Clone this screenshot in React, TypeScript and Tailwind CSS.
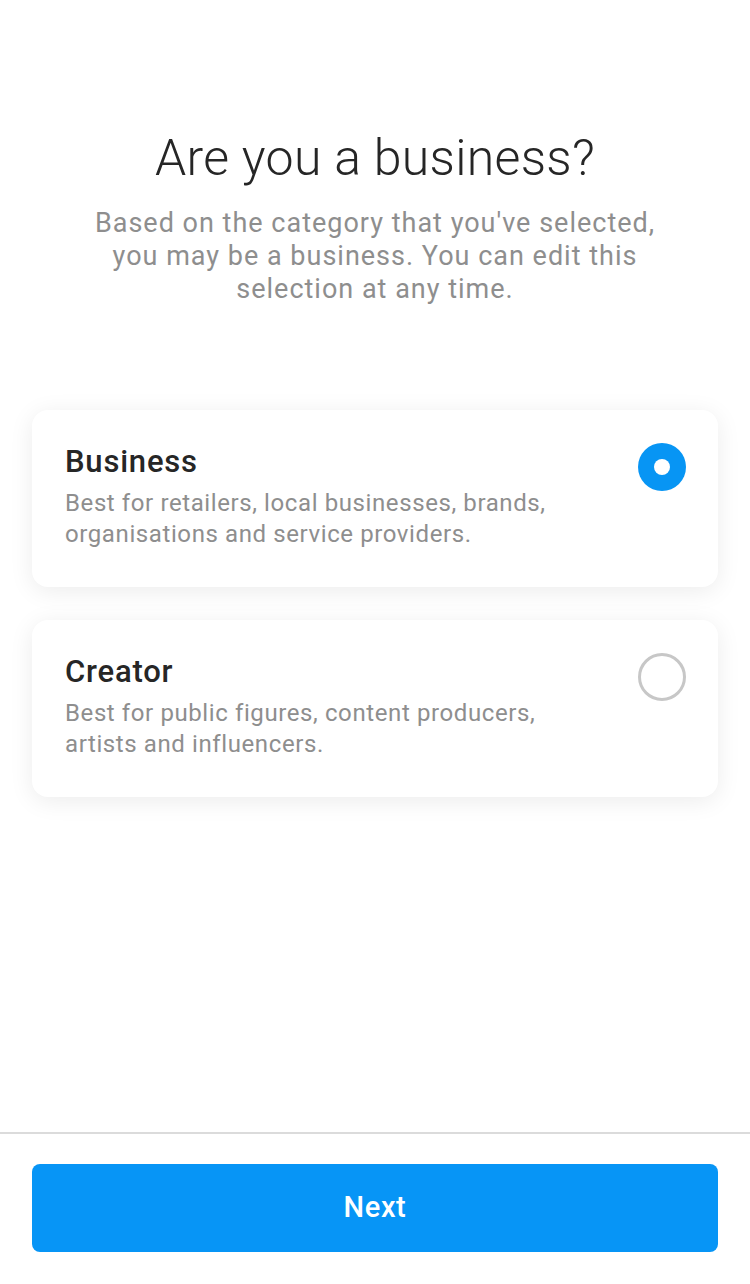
import React, { useState } from "react";

const options = [
  {
    id: "business",
    title: "Business",
    description: "Best for retailers, local businesses, brands, organisations and service providers.",
  },
  {
    id: "creator",
    title: "Creator",
    description: "Best for public figures, content producers, artists and influencers.",
  },
];

const Radio = ({ checked }: { checked: boolean }) =>
  checked ? (
    <div className="flex h-[48px] w-[48px] shrink-0 items-center justify-center rounded-full bg-[#0795f4]">
      <div className="h-[16px] w-[16px] rounded-full bg-white" />
    </div>
  ) : (
    <div className="h-[48px] w-[48px] shrink-0 rounded-full border-[3px] border-[#c7c7c7]" />
  );

export default function App() {
  const [selected, setSelected] = useState("business");

  return (
    <div
      className="flex min-h-[1284px] flex-col bg-white"
      style={{ fontFamily: "Roboto, 'Noto Sans', sans-serif" }}
    >
      <div className="flex flex-1 flex-col">
        {/* Header */}
        <div className="flex flex-col items-center pt-[130px] text-center">
          <h1 className="text-[50px] font-light leading-[56px] tracking-[0.3px] text-[#262626]">
            Are you a business?
          </h1>
          <p className="mt-[21px] max-w-[590px] text-[27px] leading-[33px] tracking-[1px] text-[#8e8e8e]">
            Based on the category that you've selected, you may be a business. You can edit this selection at any
            time.
          </p>
        </div>

        {/* Options */}
        <div className="mt-[104px] flex flex-col gap-[33px] px-[32px]">
          {options.map((o) => (
            <button
              key={o.id}
              onClick={() => setSelected(o.id)}
              className="flex items-start justify-between rounded-[16px] bg-white pb-[37px] pl-[33px] pr-[32px] pt-[34px] text-left shadow-[0_4px_24px_rgba(0,0,0,0.08)]"
            >
              <div className="flex max-w-[510px] flex-col">
                <span className="text-[31px] font-medium leading-[36px] tracking-[0.8px] text-[#262626]">
                  {o.title}
                </span>
                <span className="mt-[8px] text-[24px] leading-[31px] tracking-[0.6px] text-[#8e8e8e]">
                  {o.description}
                </span>
              </div>
              <div className="-mt-[1px]">
                <Radio checked={selected === o.id} />
              </div>
            </button>
          ))}
        </div>
      </div>

      {/* Footer */}
      <div className="border-t-2 border-[#dbdbdb] px-[32px] pb-[32px] pt-[30px]">
        <button className="flex h-[88px] w-full items-center justify-center rounded-[8px] bg-[#0795f6] text-[29px] font-medium tracking-[0.6px] text-white">
          Next
        </button>
      </div>
    </div>
  );
}
